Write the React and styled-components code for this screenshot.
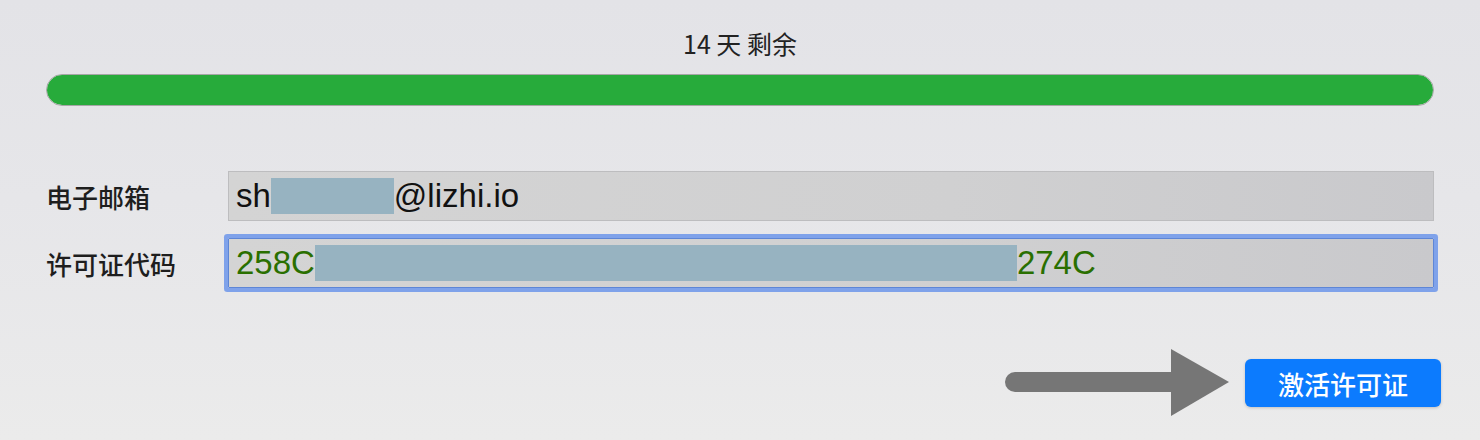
import React from "react";
import styled, { createGlobalStyle } from "styled-components";

const Global = createGlobalStyle`
  html, body { margin: 0; padding: 0; }
  body {
    width: 1480px;
    height: 440px;
    overflow: hidden;
    font-family: "Liberation Sans", "Noto Sans CJK SC", sans-serif;
    background: linear-gradient(180deg, #e3e3e7 0%, #e6e6e9 45%, #ebebeb 100%);
  }
`;

const Panel = styled.div`
  box-sizing: border-box;
  width: 1480px;
  height: 440px;
  padding: 27px 46px 0 46px;
  display: flex;
  flex-direction: column;
`;

const Title = styled.div`
  text-align: center;
  font-family: "Noto Sans CJK SC", "Liberation Sans", sans-serif;
  font-size: 25px;
  line-height: 32px;
  color: #222;
  height: 32px;
`;

const Track = styled.div`
  box-sizing: border-box;
  margin-top: 15px;
  height: 32px;
  border-radius: 16px;
  border: 1.5px solid #a6a6a6;
  background: #e0e0e0;
  overflow: hidden;
`;

const Fill = styled.div`
  height: 100%;
  background: #27ab3b;
  border-radius: 16px;
`;

const Form = styled.div`
  margin-top: 65px;
  display: flex;
  flex-direction: column;
  gap: 17px;
`;

const Row = styled.div`
  display: flex;
  align-items: center;
  height: 50px;
`;

const Label = styled.div`
  width: 182px;
  flex: none;
  font-family: "Noto Sans CJK SC", sans-serif;
  font-size: 26px;
  font-weight: 500;
  color: #1e1e1e;
  padding-left: 0;
  box-sizing: border-box;
`;

const Field = styled.div`
  position: relative;
  box-sizing: border-box;
  flex: 1;
  height: 50px;
  display: flex;
  align-items: center;
  padding-left: 7px;
  background: linear-gradient(90deg, #d4d4d4 0%, #d0d0d1 60%, #c9c9cc 100%);
  border: 1px solid ${(p) => (p.$focused ? "#5e86d6" : "#bdbdbf")};
  box-shadow: ${(p) => (p.$focused ? "0 0 0 4px #7fa2ea" : "none")};
  border-radius: ${(p) => (p.$focused ? "1px" : "0")};
  font-family: "Liberation Sans", sans-serif;
  font-size: 33px;
  color: ${(p) => (p.$focused ? "#2a6f00" : "#111")};
  white-space: nowrap;
`;

const Redact = styled.span`
  display: inline-block;
  height: 36px;
  background: #97b3c1;
  flex: none;
`;

const Actions = styled.div`
  margin-top: 61px;
  margin-right: -7px;
  display: flex;
  justify-content: flex-end;
  align-items: center;
  gap: 16px;
`;

const Arrow = styled.svg`
  display: block;
  flex: none;
`;

const Button = styled.button`
  width: 196px;
  height: 48px;
  border: none;
  border-radius: 6px;
  background: #0c7bfe;
  color: #fff;
  font-family: "Noto Sans CJK SC", sans-serif;
  font-size: 26px;
  font-weight: 500;
  box-shadow: 0 1px 3px rgba(0, 0, 0, 0.18);
  cursor: pointer;
  padding: 0;
`;

export default function App() {
  return (
    <>
      <Global />
      <Panel>
        <Title>14 天 剩余</Title>
        <Track>
          <Fill style={{ width: "100%" }} />
        </Track>
        <Form>
          <Row>
            <Label>电子邮箱</Label>
            <Field>
              sh
              <Redact style={{ width: 123 }} />
              @lizhi.io
            </Field>
          </Row>
          <Row>
            <Label>许可证代码</Label>
            <Field $focused>
              258C
              <Redact style={{ width: 702 }} />
              274C
            </Field>
          </Row>
        </Form>
        <Actions>
          <Arrow width="224" height="68" viewBox="0 0 224 68">
            <line x1="10" y1="33" x2="170" y2="33" stroke="#767676" strokeWidth="20" strokeLinecap="round" />
            <polygon points="166,0 224,33 166,67" fill="#767676" />
          </Arrow>
          <Button>激活许可证</Button>
        </Actions>
      </Panel>
    </>
  );
}
